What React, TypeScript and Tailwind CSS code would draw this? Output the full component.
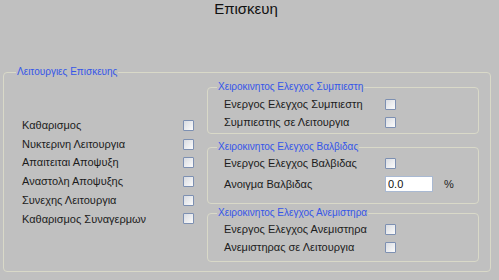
import React from "react";

const font = { fontFamily: '"Liberation Sans", Arial, sans-serif' };

function Check() {
  return (
    <span className="block w-[11px] h-[11px] border border-[#7d90b2] rounded-[1px] bg-gradient-to-br from-[#d9dce2] to-[#fbfbfb]" />
  );
}

function Group({
  title,
  className,
  legendClass,
  children,
}: {
  title: string;
  className?: string;
  legendClass?: string;
  children: React.ReactNode;
}) {
  return (
    <fieldset
      className={
        "border border-[#d9d9c8] rounded-[4px] " + (className ? className : "")
      }
    >
      <legend
        className={
          "px-[1px] text-[10px] leading-[12px] text-[#3556e8] " +
          (legendClass ? legendClass : "ml-[9px]")
        }
      >
        {title}
      </legend>
      {children}
    </fieldset>
  );
}

const leftItems = [
  "Καθαρισμος",
  "Νυκτερινη Λειτουργια",
  "Απαιτειται Αποψυξη",
  "Αναστολη Αποψυξης",
  "Συνεχης Λειτουργια",
  "Καθαρισμος Συναγερμων",
];

function Row({ label }: { label: string }) {
  return (
    <div className="flex items-center h-[18px]">
      <span className="w-[177px] pl-[16px]">{label}</span>
      <Check />
    </div>
  );
}

export default function App() {
  return (
    <div
      className="w-[499px] h-[280px] bg-[#c0c0c0] text-[11px] text-[#1c1c1c] overflow-hidden"
      style={font}
    >
      <div className="w-[492px] text-center text-[15px] leading-[17px] text-[#111]">
        Επισκευη
      </div>

      <Group
        title="Λειτουργιες Επισκευης"
        className="mt-[49px] ml-[3px] w-[488px] h-[206px]"
        legendClass="ml-[12px]"
      >
        <div className="flex">
          {/* left column */}
          <div className="w-[203px] pt-[38px] pl-[18px]">
            {leftItems.map((item) => (
              <div key={item} className="flex items-center h-[18.7px]">
                <span className="w-[161px]">{item}</span>
                <Check />
              </div>
            ))}
          </div>

          {/* right column */}
          <div className="flex flex-col w-[272px] pt-[3px]">
            <Group title="Χειροκινητος Ελεγχος Συμπιεστη" className="h-[53px]">
              <div className="pt-[2px]">
                <Row label="Ενεργος Ελεγχος Συμπιεστη" />
                <Row label="Συμπιεστης σε Λειτουργια" />
              </div>
            </Group>

            <Group title="Χειροκινητος Ελεγχος Βαλβιδας" className="mt-[7px] h-[63px]">
              <div className="pt-[1px]">
                <Row label="Ενεργος Ελεγχος Βαλβιδας" />
                <div className="flex items-center h-[22px] mt-[1px]">
                  <span className="w-[177px] pl-[16px]">Ανοιγμα Βαλβιδας</span>
                  <input
                    className="w-[48px] h-[16px] bg-white border border-[#a9b9d2] px-[2px] text-[11px] leading-[14px] text-[#111] outline-none"
                    style={font}
                    defaultValue="0.0"
                  />
                  <span className="ml-[11px]">%</span>
                </div>
              </div>
            </Group>

            <Group title="Χειροκινητος Ελεγχος Ανεμιστηρα" className="mt-[3px] h-[55px]">
              <div className="pt-[1px]">
                <Row label="Ενεργος Ελεγχος Ανεμιστηρα" />
                <Row label="Ανεμιστηρας σε Λειτουργια" />
              </div>
            </Group>
          </div>
        </div>
      </Group>
    </div>
  );
}
